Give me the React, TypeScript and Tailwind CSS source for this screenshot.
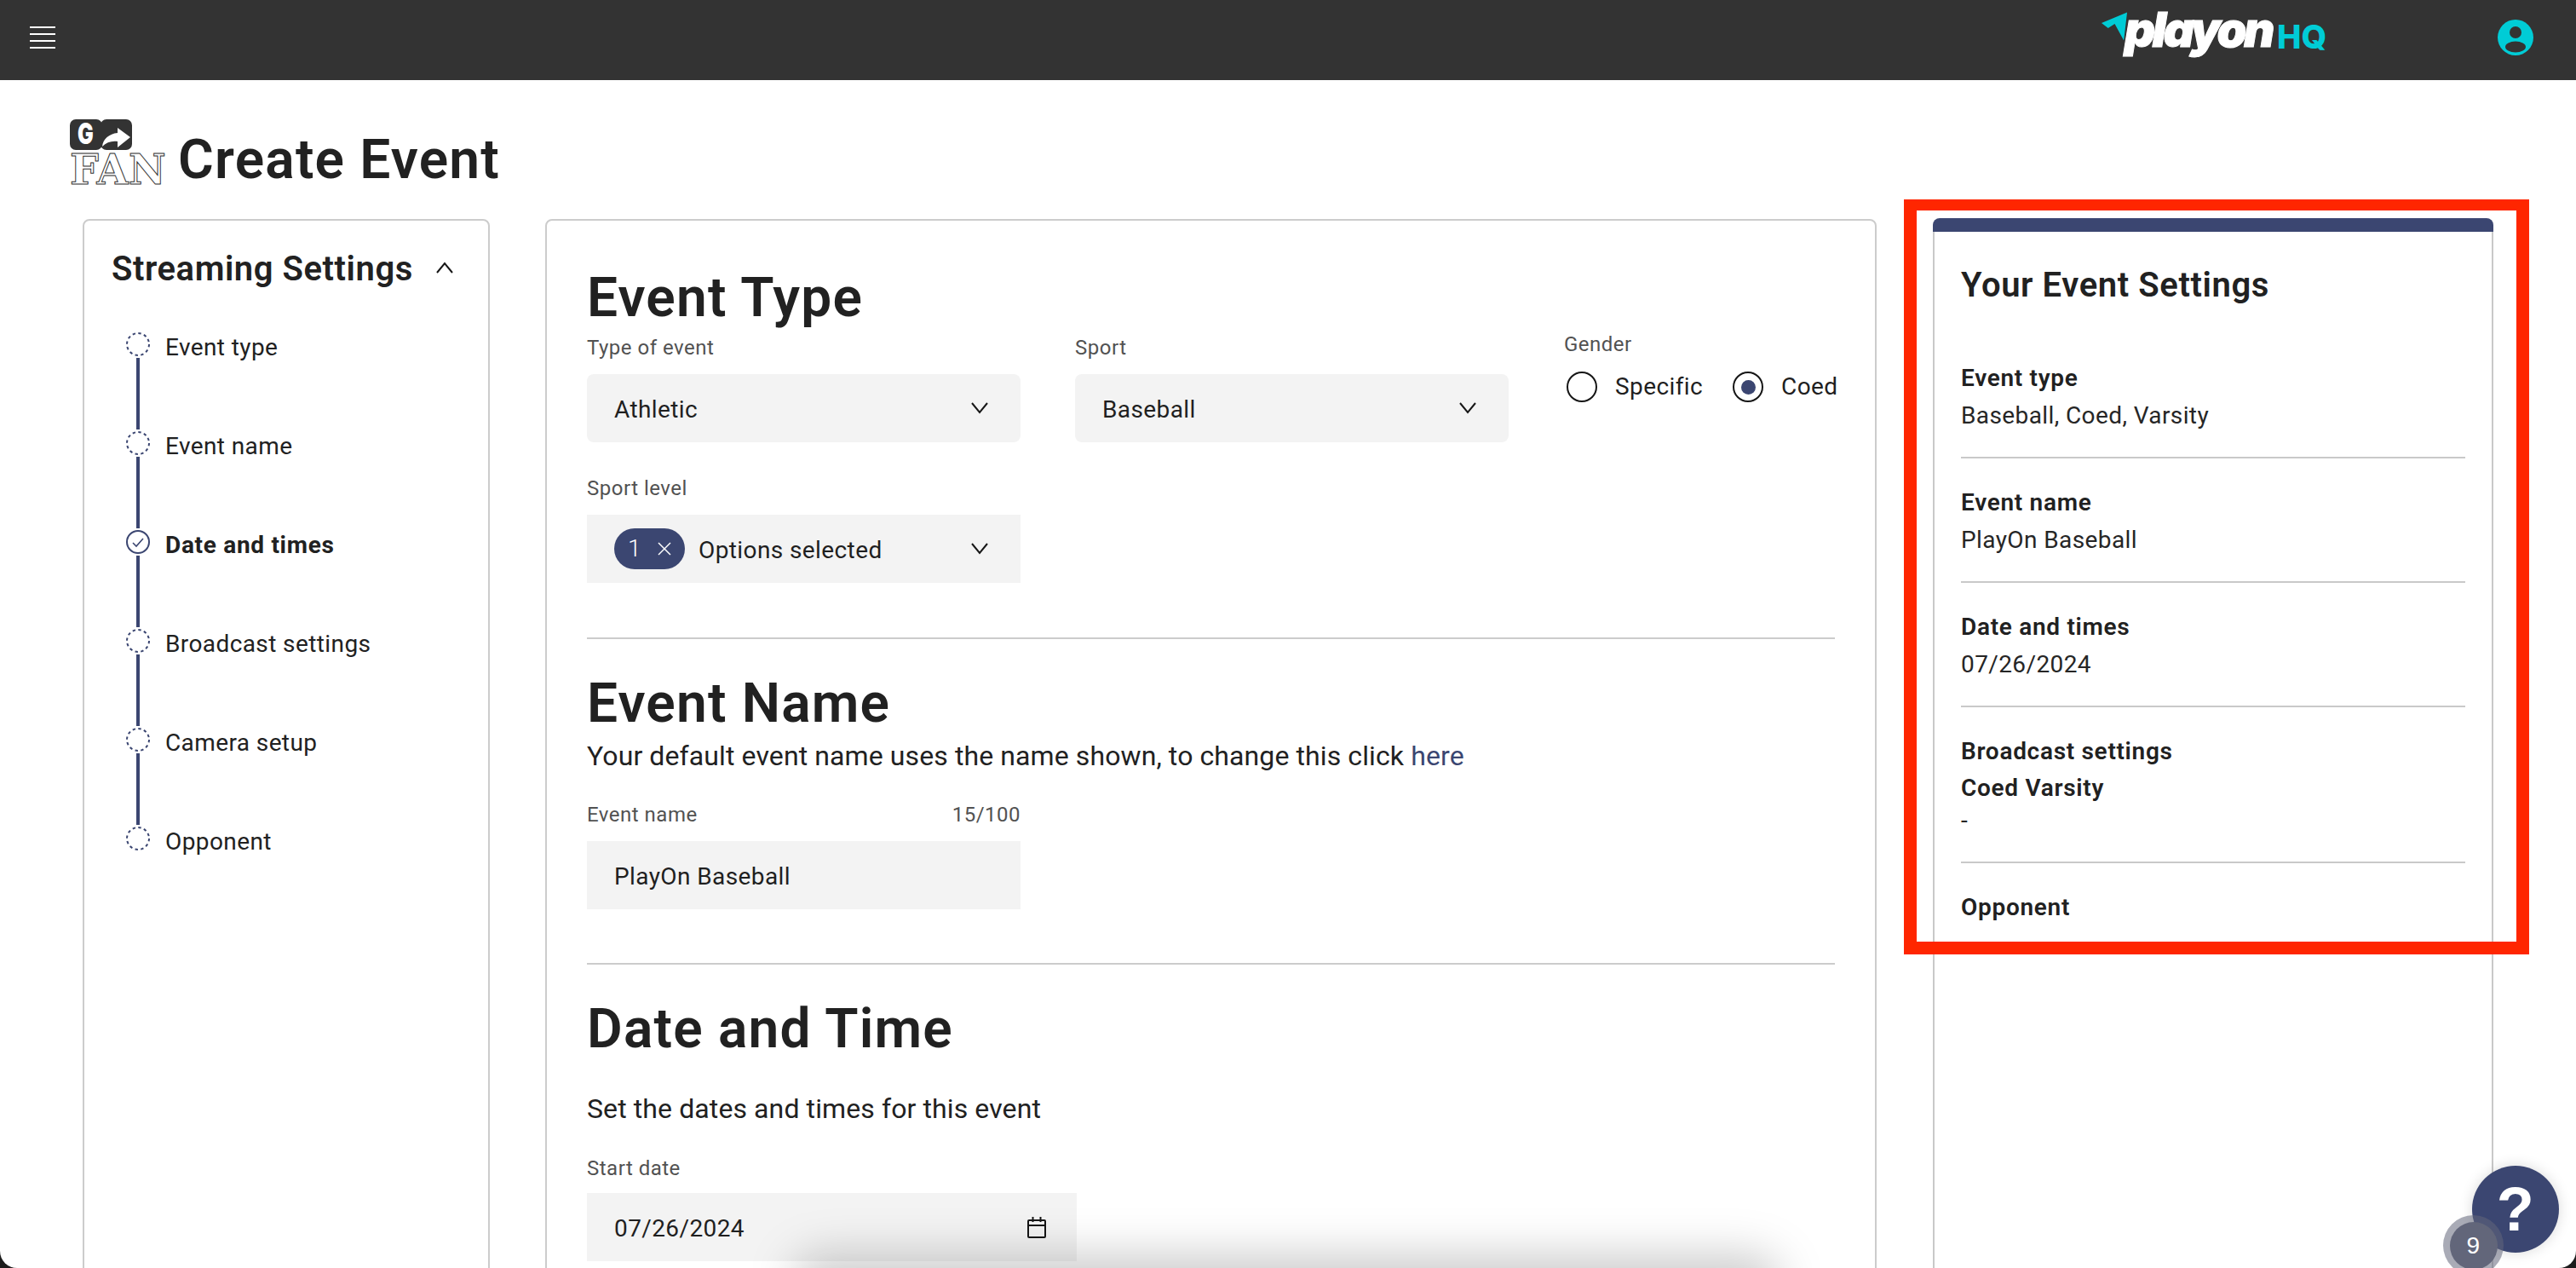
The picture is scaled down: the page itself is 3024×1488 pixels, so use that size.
const navy = "#3b4671";

const steps = [
  { label: "Event type" },
  { label: "Event name" },
  { label: "Date and times", active: true },
  { label: "Broadcast settings" },
  { label: "Camera setup" },
  { label: "Opponent" },
];

const summary = [
  { label: "Event type", value: "Baseball, Coed, Varsity" },
  { label: "Event name", value: "PlayOn Baseball" },
  { label: "Date and times", value: "07/26/2024" },
  { label: "Broadcast settings", value: "-", extra: true },
  { label: "Opponent", last: true },
];

function Chevron({ up = false, className = "" }: { up?: boolean; className?: string }) {
  return (
    <svg viewBox="0 0 20 14" className={className} fill="none" stroke="#161616" strokeWidth="2">
      <polyline points={up ? "1,13 10,2 19,13" : "1,1 10,12 19,1"} />
    </svg>
  );
}

function StepIcon({ active }: { active?: boolean }) {
  return (
    <svg viewBox="0 0 28 28" className="w-[28px] h-[28px] shrink-0" fill="none" stroke={navy}>
      {active ? (
        <>
          <circle cx="14" cy="14" r="13" strokeWidth="2" />
          <polyline points="8,15 12,19 20,10" strokeWidth="1.6" />
        </>
      ) : (
        <circle cx="14" cy="14" r="13" strokeWidth="2" strokeDasharray="3.4 3.4" />
      )}
    </svg>
  );
}

function GoFanLogo() {
  return (
    <svg viewBox="0 0 113 76" className="w-[113px] h-[76px] shrink-0 overflow-visible">
      <rect x="0" y="0" width="38" height="36" rx="7" fill="#333" />
      <rect x="36" y="0" width="37" height="36" rx="7" fill="#333" />
      <text
        x="9"
        y="29"
        fontFamily="Inter, sans-serif"
        fontWeight="900"
        fontSize="34"
        textLength="19"
        lengthAdjust="spacingAndGlyphs"
        fill="#fff"
      >
        G
      </text>
      <path d="M38 32 C39 23 46 17 56 16 L56 10 L71 21 L56 33 L56 26 C49 25 43 27 38 32 Z" fill="#fff" />
      <text
        x="0"
        y="76"
        fontFamily="'DejaVu Serif', serif"
        fontWeight="700"
        fontSize="48"
        textLength="113"
        lengthAdjust="spacingAndGlyphs"
        fill="#fff"
        stroke="#333"
        strokeWidth="1"
      >
        FAN
      </text>
    </svg>
  );
}

function Label({ children }: { children: React.ReactNode }) {
  return <span className="block pt-[2px] text-[24px] leading-[30px] tracking-[0.5px] text-[#525252]">{children}</span>;
}

function Field({ label, right, children }: { label: string; right?: string; children: React.ReactNode }) {
  return (
    <div className="w-[509px] shrink-0">
      <div className="flex justify-between h-[32px] mb-[16px]">
        <Label>{label}</Label>
        {right && <Label>{right}</Label>}
      </div>
      {children}
    </div>
  );
}

function SelectBox({ value }: { value: string }) {
  return (
    <div className="h-[80px] bg-[#f3f3f3] rounded-lg flex items-center justify-between pl-[32px] pr-[38px] text-[28px] text-[#1f1f1f]">
      <span className="pt-[3px]">{value}</span>
      <Chevron className="w-[20px] h-[14px]" />
    </div>
  );
}

function Radio({ label, checked }: { label: string; checked?: boolean }) {
  return (
    <div className="flex items-center gap-[21px]">
      <div className="w-[36px] h-[36px] rounded-full border-2 border-[#161616] flex items-center justify-center">
        {checked && <div className="w-[17px] h-[17px] rounded-full bg-[#3b4671]" />}
      </div>
      <span className="text-[28px] leading-[36px] text-[#1f1f1f]">{label}</span>
    </div>
  );
}

function Heading({ children, className = "" }: { children: React.ReactNode; className?: string }) {
  return (
    <h2 className={`pt-[3px] -mb-[3px] text-[64px] leading-[76px] tracking-[1.2px] font-semibold text-[#212121] ${className}`}>
      {children}
    </h2>
  );
}

function Summary({ label, value, extra, last }: { label: string; value?: string; extra?: boolean; last?: boolean }) {
  return (
    <div className={`pt-[34px] ${last ? "" : "pb-[30px] border-b-2 border-[#c9c9c9]"}`}>
      <div className="text-[28px] leading-[36px] tracking-[0.7px] font-semibold text-[#212121]">{label}</div>
      {extra && <div className="mt-[7px] text-[28px] leading-[36px] tracking-[0.7px] font-semibold text-[#212121]">Coed Varsity</div>}
      {value && <div className={`${extra ? "mt-[2px]" : "mt-[8px]"} text-[28px] leading-[36px] text-[#262626]`}>{value}</div>}
    </div>
  );
}

export default function App() {
  return (
    <div className="relative w-[3024px] h-[1488px] bg-[#1c1c1c] overflow-hidden font-['Roboto',sans-serif] tracking-[0.4px]">
      <div className="relative h-full bg-white rounded-b-[20px] overflow-hidden">
        {/* top bar */}
        <header className="h-[94px] bg-[#333333] relative tracking-normal">
          <div className="absolute left-[35px] top-[31px] w-[30px] h-[26px] flex flex-col justify-between">
            <div className="h-[2px] bg-white" />
            <div className="h-[2px] bg-white" />
            <div className="h-[2px] bg-white" />
            <div className="h-[2px] bg-white" />
          </div>
          <svg viewBox="0 0 34 36" className="absolute left-[2466px] top-[13px] w-[33px] h-[36px]">
            <polygon points="32,1 1,14 9,20 17,15 28,35" fill="#00ccd6" />
          </svg>
          <span className="absolute left-[2494px] top-[1px] text-[56px] leading-[68px] font-[Inter] font-black italic tracking-[-3.5px] text-white [-webkit-text-stroke:1px_white]">
            playon
          </span>
          <span className="absolute left-[2673px] top-[20px] text-[38px] leading-[46px] font-[Inter] font-extrabold text-[#00ccd6]">
            HQ
          </span>
          <svg viewBox="0 0 42 42" className="absolute left-[2932px] top-[23px] w-[42px] h-[42px]">
            <circle cx="21" cy="21" r="21" fill="#00ccd6" />
            <circle cx="21" cy="15" r="7" fill="#333" />
            <ellipse cx="21" cy="32" rx="12" ry="6.5" fill="#333" />
          </svg>
        </header>

        {/* page title */}
        <div className="h-[163px] pt-[46px] pl-[82px] flex gap-[14px]">
          <GoFanLogo />
          <h1 className="text-[64px] leading-[76px] tracking-[1.2px] font-semibold text-[#212121] mt-[10px]">Create Event</h1>
        </div>

        <div className="flex items-start pl-[97px]">
          {/* steps */}
          <aside className="w-[478px] h-[1300px] border-2 border-[#cccccc] rounded-lg shrink-0">
            <div className="pt-[31px] pl-[32px] flex items-center">
              <span className="pt-[2px] -mb-[2px] text-[40px] leading-[48px] tracking-[0.55px] font-semibold text-[#212121]">Streaming Settings</span>
              <Chevron up className="w-[24px] h-[14px] ml-[25px]" />
            </div>
            <div className="mt-[52px] pl-[49px]">
              {steps.map((s, i) => (
                <div key={s.label} className="flex">
                  <div className="flex flex-col items-center w-[28px]">
                    <StepIcon active={s.active} />
                    {i < steps.length - 1 && <div className="w-[4px] h-[84px] my-[2px] bg-[#3b4671]" />}
                  </div>
                  <span className={`ml-[18px] pt-[1px] text-[28px] leading-[34px] text-[#212121] ${s.active ? "font-bold tracking-[0.7px]" : ""}`}>{s.label}</span>
                </div>
              ))}
            </div>
          </aside>

          {/* form */}
          <main className="ml-[65px] w-[1563px] h-[1300px] border-2 border-[#cccccc] rounded-lg shrink-0 px-[47px] pt-[50px]">
            <Heading>Event Type</Heading>
            <div className="flex items-start mt-[6px] gap-[64px]">
              <Field label="Type of event">
                <SelectBox value="Athletic" />
              </Field>
              <Field label="Sport">
                <SelectBox value="Baseball" />
              </Field>
              <div className="-mt-[4px] ml-[1px] shrink-0">
                <div className="h-[32px]"><Label>Gender</Label></div>
                <div className="flex mt-[17px] gap-[35px] ml-[3px]">
                  <Radio label="Specific" />
                  <Radio label="Coed" checked />
                </div>
              </div>
            </div>
            <div className="mt-[37px]">
              <Field label="Sport level">
                <div className="h-[80px] bg-[#f3f3f3] flex items-center pl-[32px] pr-[38px] text-[28px] text-[#1f1f1f]">
                  <div className="w-[83px] h-[48px] rounded-full bg-[#3b4671] text-white flex items-center justify-between px-[16px] text-[28px]">
                    <span className="font-light">1</span>
                    <svg viewBox="0 0 16 16" className="w-[16px] h-[16px]" stroke="#fff" strokeWidth="1.5">
                      <line x1="1" y1="1" x2="15" y2="15" />
                      <line x1="15" y1="1" x2="1" y2="15" />
                    </svg>
                  </div>
                  <span className="ml-[16px] pt-[3px]">Options selected</span>
                  <Chevron className="w-[20px] h-[14px] ml-auto" />
                </div>
              </Field>
            </div>
            <div className="mt-[64px] h-[2px] bg-[#cccccc]" />

            <Heading className="mt-[35px]">Event Name</Heading>
            <p className="pt-[2px] -mb-[2px] text-[32px] leading-[48px] tracking-[0.1px] text-[#212121]">
              Your default event name uses the name shown, to change this click <span className="text-[#3b4671]">here</span>
            </p>
            <div className="mt-[30px]">
              <Field label="Event name" right="15/100">
                <div className="h-[80px] bg-[#f3f3f3] flex items-center pl-[32px] text-[28px] text-[#1f1f1f]">
                  <span className="pt-[3px]">PlayOn Baseball</span>
                </div>
              </Field>
            </div>
            <div className="mt-[63px] h-[2px] bg-[#cccccc]" />

            <Heading className="mt-[35px]">Date and Time</Heading>
            <p className="mt-[33px] pt-[1px] -mb-[1px] text-[32px] leading-[48px] tracking-[0.1px] text-[#212121]">Set the dates and times for this event</p>
            <div className="mt-[30px]">
              <div className="h-[32px] mb-[14px]"><Label>Start date</Label></div>
              <div className="w-[575px] h-[80px] bg-[#f3f3f3] flex items-center justify-between pl-[32px] pr-[36px] text-[28px] text-[#1f1f1f]">
                <span className="pt-[3px]">07/26/2024</span>
                <svg viewBox="0 0 22 25" className="w-[22px] h-[25px]" fill="none" stroke="#161616" strokeWidth="2">
                  <rect x="1" y="4" width="20" height="20" rx="1" />
                  <line x1="1" y1="10" x2="21" y2="10" />
                  <line x1="6.5" y1="0" x2="6.5" y2="6" />
                  <line x1="15.5" y1="0" x2="15.5" y2="6" />
                </svg>
              </div>
            </div>
          </main>

          {/* summary */}
          <section className="ml-[66px] w-[658px] -mt-[1px] shrink-0">
            <div className="h-[16px] bg-[#3b4671] rounded-t-lg" />
            <div className="h-[1300px] border-x-2 border-[#c9c9c9] px-[31px] pt-[37px]">
              <div className="pt-[2px] -mb-[2px] text-[40px] leading-[48px] tracking-[0.6px] font-semibold text-[#212121]">Your Event Settings</div>
              <div className="mt-[35px]">
                {summary.map((r) => (
                  <Summary key={r.label} {...r} />
                ))}
              </div>
            </div>
          </section>
        </div>

        {/* dock shadow at the bottom of the capture */}
        <div className="absolute left-[930px] top-[1472px] w-[1160px] h-[70px] rounded-full bg-black/20 blur-[26px] pointer-events-none" />

        {/* annotation box */}
        <div className="absolute left-[2235px] top-[234px] w-[734px] h-[886px] border-x-[15px] border-t-[13px] border-b-[15px] border-[#ff2600]" />

        {/* help button */}
        <div className="absolute left-[2902px] top-[1368px] w-[102px] h-[102px] rounded-full bg-[#3b4671] shadow-[0_0_16px_rgba(0,0,0,0.15)] flex items-center justify-center text-white font-['Liberation_Sans',sans-serif] font-bold text-[72px] leading-none">
          ?
        </div>
        <div className="absolute left-[2868px] top-[1426px] w-[71px] h-[71px] rounded-full bg-[#62667a]/55 flex items-center justify-center">
          <div className="w-[56px] h-[56px] rounded-full bg-[#62667a] flex items-center justify-center text-white font-['Liberation_Sans',sans-serif] text-[28px]">
            9
          </div>
        </div>
      </div>
    </div>
  );
}
